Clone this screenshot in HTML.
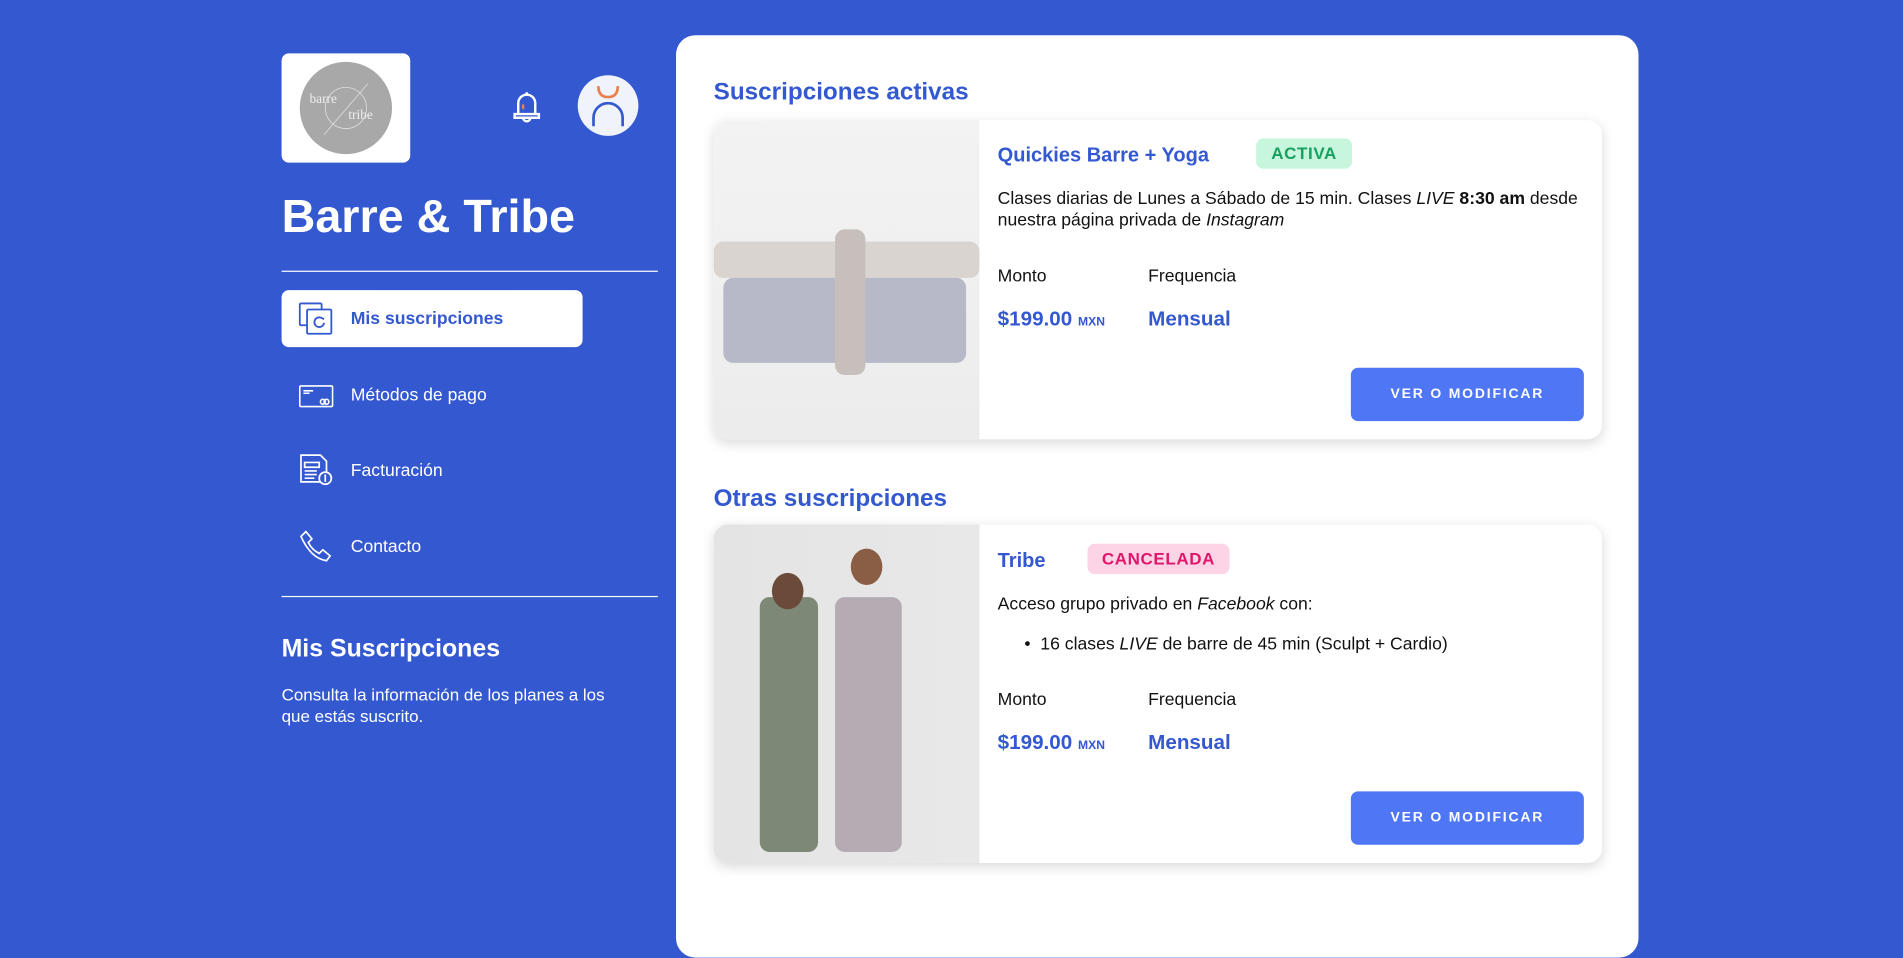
<!DOCTYPE html>
<html><head><meta charset="utf-8"><style>
*{box-sizing:border-box;margin:0;padding:0}
html,body{width:1903px;height:913px;overflow:hidden;background:#3358D0;font-family:"Liberation Sans",sans-serif}
#w{position:absolute;left:0;top:0;width:1568px;height:753px;transform:scale(1.2137);transform-origin:0 0}
.a{position:absolute}
.wt{color:#fff}
.nav{position:absolute;left:232px;width:248px;height:47px;display:flex;align-items:center;color:#fff;font-size:14.5px}
.nav svg{position:absolute;left:14px}
.nav span{position:absolute;left:57px}
.card{position:absolute;left:588px;width:732px;background:#fff;border-radius:12px;box-shadow:0 3px 10px rgba(0,0,0,.15);overflow:hidden}
.img{position:absolute;left:0;top:0;bottom:0;width:219px}
.ttl{position:absolute;left:234px;font-size:16.5px;font-weight:bold;color:#3358D0}
.badge{position:absolute;font-size:14px;font-weight:bold;letter-spacing:.5px;border-radius:6px;text-align:center;line-height:25px;height:25px}
.txt{position:absolute;left:234px;font-size:14.5px;color:#111;line-height:18px}
.lbl{position:absolute;font-size:14.5px;color:#111}
.val{position:absolute;font-size:17px;font-weight:bold;color:#3358D0}
.val small{font-size:10px}
.btn{position:absolute;left:525px;width:192px;height:44px;background:#4F77F5;border-radius:6px;color:#fff;font-size:11.5px;font-weight:bold;letter-spacing:1.5px;text-align:center;line-height:44px}
h2{position:absolute;left:588px;font-size:20px;color:#3358D0}
.fig{position:absolute;border-radius:8px}
</style></head><body><div id="w">
<div class="a" style="left:232px;top:44px;width:106px;height:90px;background:#fff;border-radius:6px"></div>
<div class="a" style="left:247px;top:51px;width:76px;height:76px;border-radius:50%;background:#a8a8a8"></div>
<svg class="a" style="left:247px;top:51px" width="76" height="76"><circle cx="38" cy="38" r="17" fill="none" stroke="#ddd" stroke-width=".7"/><line x1="20" y1="60" x2="56" y2="18" stroke="#ddd" stroke-width=".7"/><text x="8" y="34" font-family="Liberation Serif" font-size="11" fill="#eee">barre</text><text x="40" y="47" font-family="Liberation Serif" font-size="11" fill="#eee">tribe</text></svg>
<svg class="a" style="left:420px;top:72px" width="28" height="32" viewBox="0 0 28 32" fill="none" stroke="#fff" stroke-width="2"><path d="M7 22V13a7 7 0 0 1 14 0v9H7zM4 22h20v3H4zM11 25a3 3 0 0 0 6 0M14 4v2"/><line x1="11" y1="14" x2="11" y2="18" stroke="#e8804a"/></svg>
<div class="a" style="left:476px;top:62px;width:50px;height:50px;border-radius:50%;background:#f1f3fb"></div>
<svg class="a" style="left:476px;top:62px" width="50" height="50" fill="none" stroke-width="2.2"><path d="M17 9Q17 18 25 18Q33 18 33 9" stroke="#e8804a"/><path d="M13 42V35a12 12 0 0 1 24 0v7" stroke="#3358D0"/></svg>
<div class="a wt" style="left:232px;top:157px;font-size:38.5px;font-weight:bold">Barre &amp; Tribe</div>
<div class="a" style="left:232px;top:223px;width:310px;height:1px;background:#fff"></div>
<div class="nav" style="top:239px;background:#fff;border-radius:6px;color:#3358D0;font-weight:bold"><svg width="28" height="28" fill="none" stroke="#3358D0" stroke-width="1.5"><rect x="1" y="1" width="18" height="18" rx="1"/><rect x="7" y="6" width="20" height="20" rx="1" fill="#fff"/><path d="M21 17a4 4 0 1 1-2-4l2 1"/></svg><span>Mis suscripciones</span></div>
<div class="nav" style="top:302px"><svg width="30" height="24" fill="none" stroke="#fff" stroke-width="1.3"><rect x="1" y="4" width="27" height="17" rx="1"/><path d="M4 8h8M4 10h5"/><circle cx="20" cy="17" r="2"/><circle cx="23" cy="17" r="2"/></svg><span>Métodos de pago</span></div>
<div class="nav" style="top:364px"><svg width="30" height="30" fill="none" stroke="#fff" stroke-width="1.4"><path d="M2 2h16l5 5v17H2z"/><path d="M5 8h12v4H5zM5 15h10M5 18h10M5 21h8"/><circle cx="22" cy="21" r="5" fill="#3358D0"/><path d="M22 18v6"/></svg><span>Facturación</span></div>
<div class="nav" style="top:427px"><svg width="30" height="30" fill="none" stroke="#fff" stroke-width="1.4"><path d="M6 2l5 6-3 3q3 6 9 9l3-3 6 5-3 4Q10 24 2 6z"/></svg><span>Contacto</span></div>
<div class="a" style="left:232px;top:491px;width:310px;height:1px;background:#fff"></div>
<div class="a wt" style="left:232px;top:523px;font-size:20.5px;font-weight:bold">Mis Suscripciones</div>
<div class="a wt" style="left:232px;top:563px;font-size:14px;line-height:18px;width:285px">Consulta la información de los planes a los que estás suscrito.</div>

<div class="a" style="left:557px;top:29px;width:793px;height:760px;background:#fff;border-radius:16px"></div>
<h2 style="top:65px">Suscripciones activas</h2>
<div class="card" style="top:99px;height:263px">
<div class="img" style="background:linear-gradient(180deg,#f3f3f3 0%,#ececec 100%)">
<div class="fig" style="left:0;top:100px;width:219px;height:30px;background:#d9d4d0"></div>
<div class="fig" style="left:8px;top:130px;width:200px;height:70px;background:#b7b9c8"></div>
<div class="fig" style="left:100px;top:90px;width:25px;height:120px;background:#c7bfbb"></div>
</div>
<div class="ttl" style="top:20px">Quickies Barre + Yoga</div>
<div class="badge" style="left:447px;top:15px;width:79px;background:#c8f6dc;color:#17a060">ACTIVA</div>
<div class="txt" style="top:56px;width:490px">Clases diarias de Lunes a Sábado de 15 min. Clases <i>LIVE</i> <b>8:30 am</b> desde nuestra página privada de <i>Instagram</i></div>
<div class="lbl" style="left:234px;top:121px">Monto</div><div class="lbl" style="left:358px;top:121px">Frequencia</div>
<div class="val" style="left:234px;top:154px">$199.00 <small>MXN</small></div><div class="val" style="left:358px;top:154px">Mensual</div>
<div class="btn" style="top:204px">VER O MODIFICAR</div>
</div>
<h2 style="top:400px">Otras suscripciones</h2>
<div class="card" style="top:432px;height:279px">
<div class="img" style="background:linear-gradient(90deg,#e4e4e4 0%,#e8e8e8 100%)">
<div class="fig" style="left:38px;top:60px;width:48px;height:210px;background:#7e8876"></div>
<div class="fig" style="left:100px;top:60px;width:55px;height:210px;background:#b4acb2"></div>
<div class="fig" style="left:48px;top:40px;width:26px;height:30px;border-radius:50%;background:#6b4a3a"></div>
<div class="fig" style="left:113px;top:20px;width:26px;height:30px;border-radius:50%;background:#8a5e44"></div>
</div>
<div class="ttl" style="top:21px">Tribe</div>
<div class="badge" style="left:308px;top:16px;width:117px;background:#fdd4e6;color:#e0156b">CANCELADA</div>
<div class="txt" style="top:57px">Acceso grupo privado en <i>Facebook</i> con:</div>
<div class="txt" style="top:90px;left:256px">•&nbsp;&nbsp;16 clases <i>LIVE</i> de barre de 45 min (Sculpt + Cardio)</div>
<div class="lbl" style="left:234px;top:137px">Monto</div><div class="lbl" style="left:358px;top:137px">Frequencia</div>
<div class="val" style="left:234px;top:170px">$199.00 <small>MXN</small></div><div class="val" style="left:358px;top:170px">Mensual</div>
<div class="btn" style="top:220px">VER O MODIFICAR</div>
</div>
</div></body></html>
